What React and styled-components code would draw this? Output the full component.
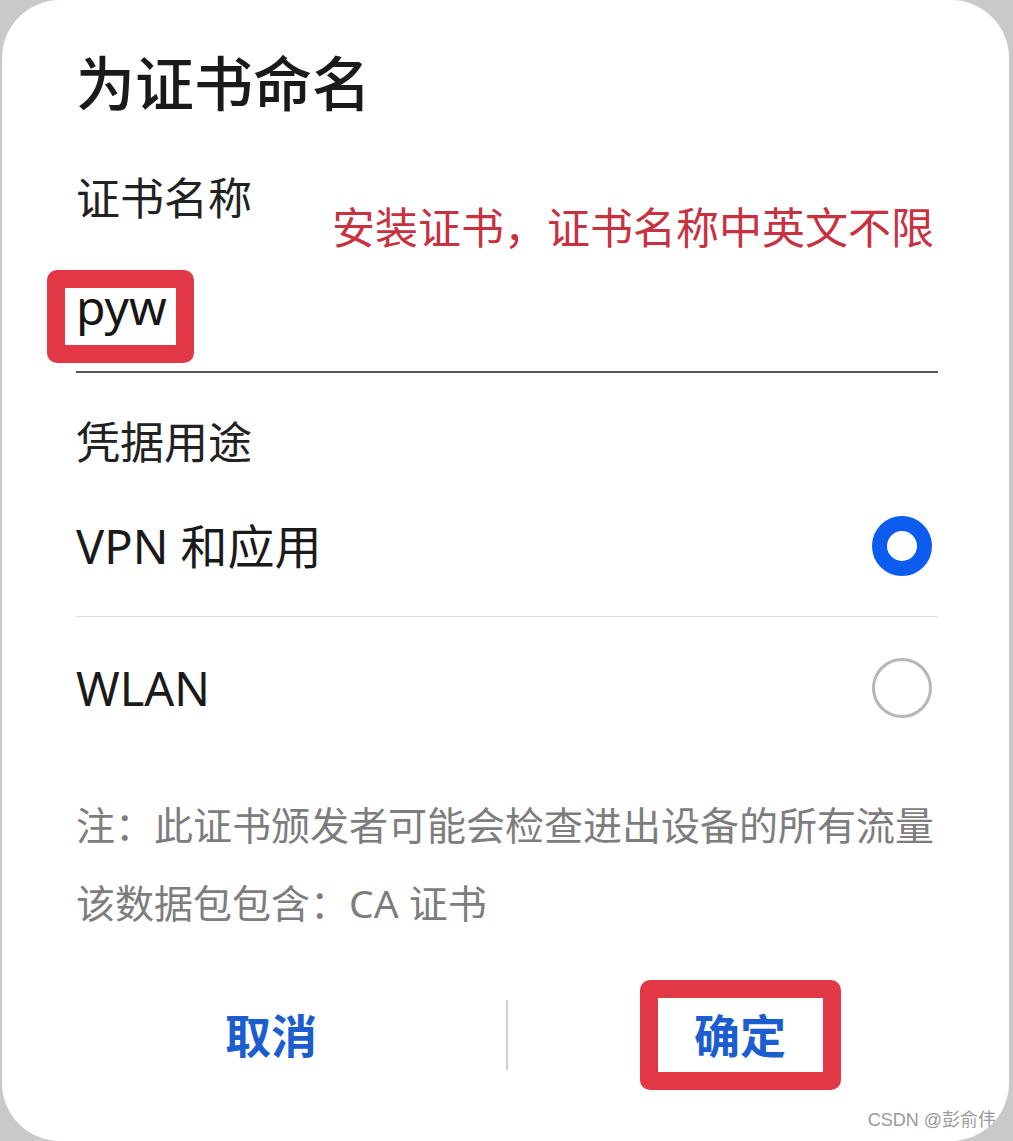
import React from "react";
import styled, { createGlobalStyle } from "styled-components";

const GlobalStyle = createGlobalStyle`
  html, body {
    margin: 0;
    padding: 0;
    background: #c9c9c9;
  }
  body {
    font-family: "Noto Sans", "Noto Sans CJK SC", sans-serif;
    color: #1b1b1b;
  }
  * { box-sizing: border-box; }
`;

const Dialog = styled.div`
  position: relative;
  margin-left: 2px;
  width: 1007px;
  height: 1141px;
  background: #ffffff;
  border-radius: 58px;
  overflow: hidden;
  padding: 54px 71px 0 74px;
  display: flex;
  flex-direction: column;
`;

const Title = styled.h1`
  margin: 0;
  font-size: 59px;
  line-height: 58px;
  font-weight: 500;
  color: #1a1a1a;
`;

const Field = styled.div`
  position: relative;
  margin-top: 64px;
`;

const Label = styled.div`
  font-size: 44px;
  line-height: 44px;
  color: #222222;
  margin-top: ${(p) => p.$gap || 0}px;
`;

const Annotation = styled.div`
  position: absolute;
  left: 256px;
  top: 30px;
  font-size: 43px;
  line-height: 43px;
  color: #c8313f;
  white-space: nowrap;
`;

const InputLine = styled.div`
  padding: 63px 0 40px;
  border-bottom: 2px solid #555555;
  font-size: 48px;
  line-height: 48px;
  color: #161616;
`;

const Highlight = styled.span`
  position: relative;
  display: inline-block;
`;

const Frame = styled.span`
  position: absolute;
  top: ${(p) => p.$t}px;
  bottom: ${(p) => p.$b}px;
  left: ${(p) => p.$l}px;
  right: ${(p) => p.$r}px;
  border: 18px solid #e23845;
  border-radius: 10px;
  pointer-events: none;
`;

const Options = styled.div`
  margin-top: 11px;
  display: flex;
  flex-direction: column;
`;

const OptionRow = styled.div`
  height: 142px;
  display: flex;
  align-items: center;
  justify-content: space-between;
  font-size: 47px;
  line-height: 46px;
  color: #1a1a1a;
  border-bottom: ${(p) => (p.$divider ? "1px solid #dcdcdc" : "none")};
`;

const Radio = styled.span`
  width: 60px;
  height: 60px;
  margin-right: 6px;
  border-radius: 50%;
  border: ${(p) => (p.$checked ? "15px solid #0c5cf0" : "3px solid #b7b7b7")};
  background: #ffffff;
  flex: none;
`;

const Note = styled.div`
  margin-top: 27px;
  font-size: 39px;
  line-height: 78px;
  color: #7d7d7d;
  white-space: nowrap;
`;

const Buttons = styled.div`
  margin: 38px -40px 0 -40px;
  height: 110px;
  display: grid;
  grid-template-columns: 1fr 2px 1fr;
  align-items: center;
`;

const Button = styled.div`
  display: flex;
  justify-content: center;
  align-items: center;
  font-size: 46px;
  line-height: 46px;
  font-weight: 700;
  color: #1c5ecf;
  padding-right: ${(p) => p.$shift || 0}px;
`;

const VDivider = styled.div`
  width: 2px;
  height: 70px;
  background: #cfcfcf;
`;

const Watermark = styled.div`
  position: absolute;
  right: 13px;
  bottom: 11px;
  font-family: "Liberation Sans", "Noto Sans CJK SC", sans-serif;
  font-size: 18px;
  line-height: 20px;
  color: #9a9a9a;
`;

export default function App() {
  return (
    <>
      <GlobalStyle />
      <Dialog>
        <Title>为证书命名</Title>
        <Field>
          <Label>证书名称</Label>
          <Annotation>安装证书，证书名称中英文不限</Annotation>
          <InputLine>
            <Highlight>
              pyw
              <Frame $t={-13} $b={-32} $l={-29} $r={-27} />
            </Highlight>
          </InputLine>
        </Field>
        <Label $gap={47}>凭据用途</Label>
        <Options>
          <OptionRow $divider>
            <span>VPN 和应用</span>
            <Radio $checked />
          </OptionRow>
          <OptionRow>
            <span>WLAN</span>
            <Radio />
          </OptionRow>
        </Options>
        <Note>
          注：此证书颁发者可能会检查进出设备的所有流量
          <br />
          该数据包包含：CA 证书
        </Note>
        <Buttons>
          <Button>取消</Button>
          <VDivider />
          <Button $shift={6}>
            <Highlight>
              确定
              <Frame $t={-32} $b={-32} $l={-54} $r={-55} />
            </Highlight>
          </Button>
        </Buttons>
        <Watermark>CSDN @彭俞伟</Watermark>
      </Dialog>
    </>
  );
}
